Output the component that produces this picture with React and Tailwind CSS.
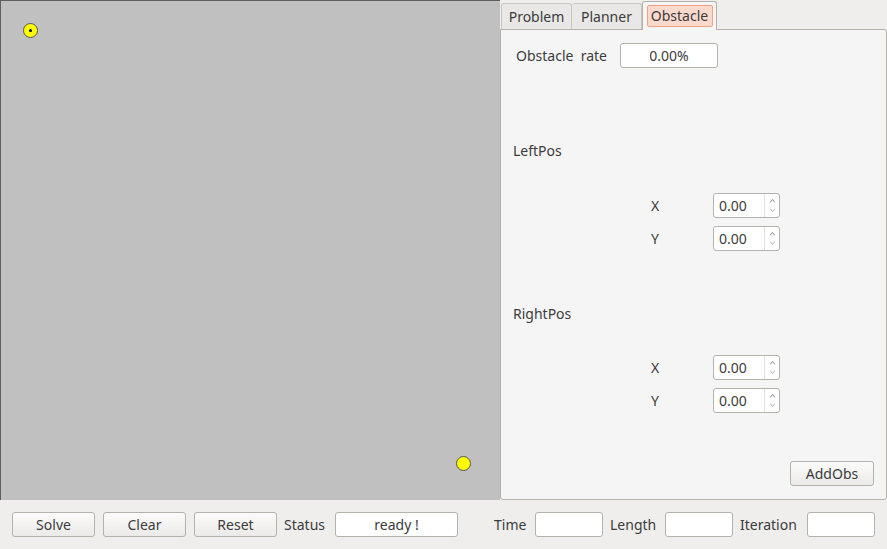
import React from "react";

const font = { fontFamily: '"Noto Sans", "DejaVu Sans", sans-serif' };

function Button({ children, className = "" }) {
  return (
    <div
      className={`flex h-[25px] items-center justify-center rounded-[3px] border border-[#b5b1ab] bg-gradient-to-b from-[#fbfbfa] to-[#ebeae8] text-[14px] text-[#3c3c3c] ${className}`}
    >
      {children}
    </div>
  );
}

function Field({ value = "", className = "" }) {
  return (
    <div
      className={`flex h-[25px] items-center justify-center rounded-[3px] border border-[#b5b1ab] bg-white text-[14px] text-[#3c3c3c] ${className}`}
    >
      {value}
    </div>
  );
}

function SpinBox() {
  return (
    <div className="flex h-[25px] w-[67px] rounded-[3px] border border-[#b5b1ab] bg-white">
      <div className="flex flex-1 items-center pl-[5px] text-[14px] text-[#3c3c3c]">0.00</div>
      <div className="flex w-[15px] flex-col items-center justify-center border-l border-[#e2e0dd]">
        <svg width="5" height="4" viewBox="0 0 5 4" className="mb-[5px]">
          <path d="M0 3.5 L2.5 0.5 L5 3.5" fill="none" stroke="#777" strokeWidth="0.9" />
        </svg>
        <svg width="5" height="4" viewBox="0 0 5 4">
          <path d="M0 0.5 L2.5 3.5 L5 0.5" fill="none" stroke="#aaa" strokeWidth="0.9" />
        </svg>
      </div>
    </div>
  );
}

function PosRow({ label }) {
  return (
    <div className="flex items-center">
      <div className="box-content w-[62px] pl-[150px] text-[14px] text-[#3c3c3c]">{label}</div>
      <SpinBox />
    </div>
  );
}

function Dot({ x, y, center }) {
  return (
    <div
      className="absolute flex h-[15px] w-[15px] items-center justify-center rounded-full border border-[#555] bg-[#ffff00]"
      style={{ left: x - 7.5, top: y - 7.5 }}
    >
      {center && <div className="h-[3px] w-[3px] rounded-full bg-black" />}
    </div>
  );
}

export default function App() {
  return (
    <div className="flex h-[549px] w-[887px] flex-col bg-[#efeeec]" style={font}>
      <div className="flex h-[500px]">
        <div className="relative h-[500px] w-[500px] border-l border-t border-[#5e5e5e] bg-[#c0c0c0]">
          <Dot x={29} y={29} center />
          <Dot x={462} y={462} />
        </div>
        <div className="flex w-[387px] flex-col">
          <div className="flex h-[29px] items-end pl-[1px]">
            <div className="flex h-[26px] w-[71px] items-center justify-center rounded-t-[3px] border border-b-0 border-[#c9c6c1] bg-[#e9e8e6] pb-[1px] text-[14px] text-[#3c3c3c]">
              Problem
            </div>
            <div className="flex h-[26px] w-[70px] items-center justify-center rounded-t-[3px] border border-b-0 border-l-0 border-[#c9c6c1] bg-[#e9e8e6] pb-[1px] text-[14px] text-[#3c3c3c]">
              Planner
            </div>
            <div className="relative -mb-[1px] flex h-[29px] w-[75px] items-start justify-center rounded-t-[3px] border border-b-0 border-[#b5b1ab] bg-[#f5f5f5] pt-[3px]">
              <div className="flex h-[22px] w-[66px] items-center justify-center rounded-[2px] border border-[#f0a287] bg-[#fbd9cd] pb-[1px] text-[14px] text-[#3c3c3c]">
                Obstacle
              </div>
            </div>
          </div>
          <div className="flex flex-1 flex-col rounded-[3px] rounded-tl-none border border-[#b5b1ab] bg-[#f5f5f5]">
            <div className="mt-[13px] flex items-center pl-[15px]">
              <span className="w-[104px] text-[14px] text-[#3c3c3c]">Obstacle&nbsp; rate</span>
              <Field value="0.00%" className="w-[98px]" />
            </div>
            <div className="mt-[72px] pl-[12px] text-[14px] text-[#3c3c3c]">LeftPos</div>
            <div className="mt-[32px] flex flex-col gap-[8px]">
              <PosRow label="X" />
              <PosRow label="Y" />
            </div>
            <div className="mt-[52px] pl-[12px] text-[14px] text-[#3c3c3c]">RightPos</div>
            <div className="mt-[31px] flex flex-col gap-[8px]">
              <PosRow label="X" />
              <PosRow label="Y" />
            </div>
            <div className="mt-auto mb-[13px] flex justify-end pr-[12px]">
              <Button className="w-[84px]">AddObs</Button>
            </div>
          </div>
        </div>
      </div>
      <div className="flex flex-1 items-center gap-[7px] pl-[12px] text-[14px] text-[#3c3c3c]">
        <Button className="mr-[1px] w-[83px]">Solve</Button>
        <Button className="mr-[1px] w-[83px]">Clear</Button>
        <Button className="w-[83px]">Reset</Button>
        <span className="w-[44px]">Status</span>
        <Field value="ready !" className="w-[123px]" />
        <span className="ml-[29px] w-[34px]">Time</span>
        <Field className="w-[68px]" />
        <span className="w-[48px]">Length</span>
        <Field className="w-[68px]" />
        <span className="w-[60px]">Iteration</span>
        <Field className="w-[68px]" />
      </div>
    </div>
  );
}
